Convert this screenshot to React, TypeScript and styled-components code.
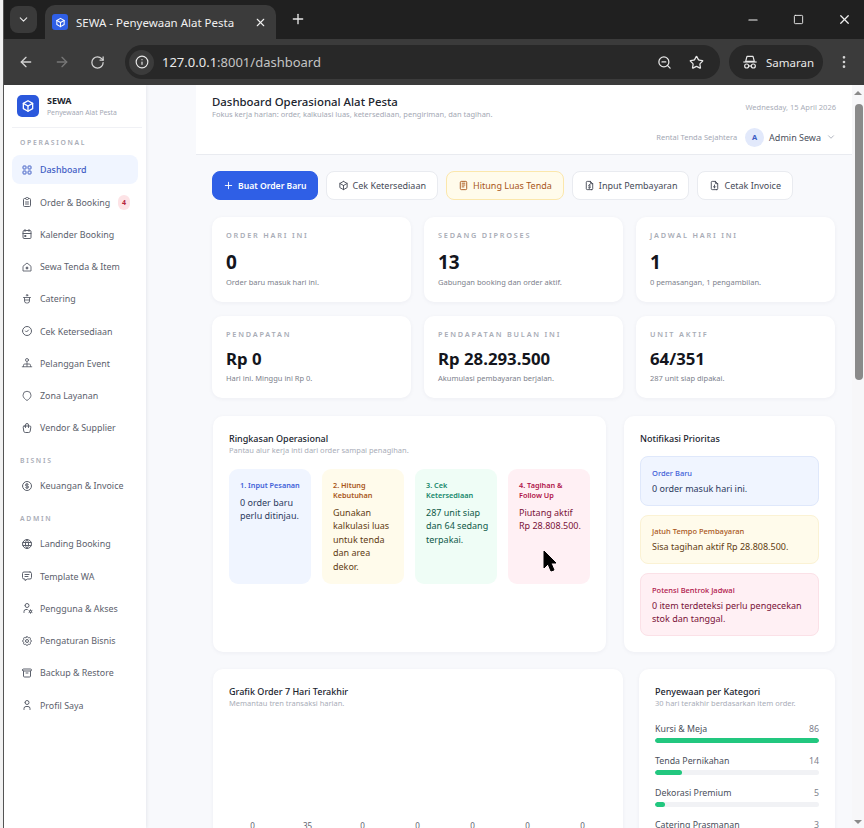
import React from "react";
import styled, { createGlobalStyle } from "styled-components";
import {
    ArrowLeft,
    ArrowRight,
    ChevronDown,
    Info,
    Minus,
    MoreVertical,
    Plus,
    RotateCw,
    Square,
    Star,
    X,
    ZoomOut,
} from "lucide-react";
import {
    TbArchive,
    TbBox,
    TbCalendarEvent,
    TbCircleCheck,
    TbClipboardText,
    TbCoin,
    TbFileDollar,
    TbFileDownload,
    TbLayoutGrid,
    TbMessage,
    TbNotes,
    TbSettings,
    TbShoppingBag,
    TbUser,
    TbUserCog,
    TbWorld,
} from "react-icons/tb";

const HomeDot = () => (
    <svg width="16" height="16" viewBox="0 0 24 24" fill="none" stroke="currentColor" strokeWidth="1.8" strokeLinejoin="round">
        <path d="M4 10.5 12 4l8 6.5V20H4z" />
        <circle cx="12" cy="14" r="2" fill="currentColor" />
    </svg>
);

const Pot = () => (
    <svg width="16" height="16" viewBox="0 0 24 24" fill="none" stroke="currentColor" strokeWidth="1.8" strokeLinecap="round" strokeLinejoin="round">
        <circle cx="12" cy="4.5" r="1.5" />
        <path d="M5 9h14" />
        <path d="M7 9v7a4 4 0 0 0 4 4h2a4 4 0 0 0 4-4V9" />
        <path d="M7 14h10" />
    </svg>
);

const People = () => (
    <svg width="16" height="16" viewBox="0 0 24 24" fill="none" stroke="currentColor" strokeWidth="1.8" strokeLinecap="round" strokeLinejoin="round">
        <circle cx="12" cy="6" r="3" />
        <path d="M5 19v-2.5A2.5 2.5 0 0 1 7.5 14h9a2.5 2.5 0 0 1 2.5 2.5V19" />
        <path d="M12 11v8" />
        <path d="M2.5 19.5h19" />
    </svg>
);

const Zone = () => (
    <svg width="16" height="16" viewBox="0 0 24 24" fill="none" stroke="currentColor" strokeWidth="1.8" strokeLinejoin="round">
        <path d="M12 21c-4-2.5-8-6-8-10.500a8 8 0 0 1 16 0C20 15 16 18.500 12 21z" />
    </svg>
);

const Incognito = () => (
    <svg width="16" height="16" viewBox="0 0 24 24" fill="none" stroke="currentColor" strokeWidth="1.8" strokeLinejoin="round">
        <path d="M7.500 3.500h9l2 7.500h-13z" />
        <path d="M2 12h20" />
        <circle cx="7" cy="18" r="3" />
        <circle cx="17" cy="18" r="3" />
        <path d="M10 18h4" />
    </svg>
);

const Cube = ({ size }: { size: number }) => (
    <svg width={size} height={size} viewBox="0 0 24 24" fill="none" stroke="#fff" strokeWidth="2.2" strokeLinejoin="round" strokeLinecap="round">
        <path d="M12 3l8 4.500v9L12 21l-8-4.500v-9z" />
        <path d="M4 7.500l8 4.500 8-4.500" />
        <path d="M12 12v9" />
    </svg>
);

const GlobalStyle = createGlobalStyle`
    html, body {
        margin: 0;
        padding: 0;
        height: 828px;
        overflow: hidden;
        background: #f4f4f4;
        font-family: "Noto Sans", "Open Sans", sans-serif;
    }

    * {
        box-sizing: border-box;
    }
`;

const Screen = styled.div`
    position: relative;
    display: flex;
    width: 864px;
    height: 828px;
    overflow: hidden;
`;

const DesktopStrip = styled.div`
    width: 4px;
    flex-shrink: 0;
    background: #f2f2f2;
    border-right: 1px solid #555;
`;

const Browser = styled.div`
    flex: 1;
    min-width: 0;
    display: flex;
    flex-direction: column;
`;

const TabStrip = styled.div`
    height: 39px;
    flex-shrink: 0;
    background: #202020;
    display: flex;
    align-items: flex-end;
    color: #e8e8e8;
    padding-left: 6px;
`;

const TabMenu = styled.div`
    width: 27px;
    height: 27px;
    margin: 0 8px 6px 0;
    border-radius: 8px;
    background: #3a3a3a;
    display: flex;
    align-items: center;
    justify-content: center;
`;

const Tab = styled.div`
    width: 231px;
    height: 34px;
    border-radius: 10px 10px 0 0;
    background: #3b3b3b;
    display: flex;
    align-items: center;
    padding: 0 9px 0 7px;
    font-size: 11.500px;
    color: #f0f0f0;
`;

const Favicon = styled.div`
    width: 16px;
    height: 16px;
    border-radius: 3px;
    background: #2f5fe6;
    display: flex;
    align-items: center;
    justify-content: center;
    margin-right: 8px;
`;

const TabTitle = styled.span`
    flex: 1;
    white-space: nowrap;
`;

const NewTab = styled.div`
    margin: 0 0 10px 14px;
    height: 20px;
    display: flex;
    align-items: center;
`;

const WindowControls = styled.div`
    margin-left: auto;
    align-self: center;
    display: flex;
    align-items: center;
    gap: 33px;
    padding: 0 12px 0 0;
    color: #f0f0f0;
`;

const Toolbar = styled.div`
    height: 46px;
    flex-shrink: 0;
    background: #3b3b3b;
    display: flex;
    align-items: center;
    padding: 0 8px 0 14px;
    color: #d4d4d4;
`;

const NavIcons = styled.div`
    display: flex;
    align-items: center;
    gap: 20px;
    width: 107px;
    flex-shrink: 0;
`;

const Omnibox = styled.div`
    width: 595px;
    height: 34px;
    border-radius: 17px;
    background: #282828;
    display: flex;
    align-items: center;
    padding: 0 16px 0 4px;
    font-size: 13px;
    color: #e8e8e8;
`;

const SiteInfo = styled.div`
    width: 25px;
    height: 25px;
    border-radius: 50%;
    background: #3b3b3b;
    display: flex;
    align-items: center;
    justify-content: center;
    margin-right: 8px;
`;

const Path = styled.span`
    color: #c4c4c4;
`;

const OmniActions = styled.div`
    margin-left: auto;
    display: flex;
    align-items: center;
    gap: 17px;
`;

const Incog = styled.div`
    margin-left: 9px;
    width: 94px;
    height: 34px;
    border-radius: 17px;
    background: #282828;
    display: flex;
    align-items: center;
    gap: 8px;
    padding-left: 13px;
    font-size: 11.500px;
    color: #e8e8e8;
`;

const MoreButton = styled.div`
    margin-left: 13px;
    display: flex;
    align-items: center;
`;

const Page = styled.div`
    flex: 1;
    min-height: 0;
    display: flex;
    background: #f8f9fc;
`;

const Sidebar = styled.aside`
    width: 142px;
    flex-shrink: 0;
    background: #fff;
    box-shadow: 1px 0 3px rgba(30, 40, 70, 0.08);
    padding: 0 8px;
`;

const Brand = styled.div`
    height: 43px;
    display: flex;
    align-items: center;
    gap: 8px;
    padding: 0 0 0 5px;
    margin: 0 -4px 0 0;
    border-bottom: 1px solid #f0f1f5;
`;

const BrandLogo = styled.div`
    width: 22px;
    height: 22px;
    border-radius: 5px;
    background: #2b58dc;
    display: flex;
    align-items: center;
    justify-content: center;
`;

const BrandName = styled.div`
    font-size: 9px;
    font-weight: 700;
    line-height: 12px;
    color: #20242e;
`;

const BrandSub = styled.div`
    font-size: 6.800px;
    line-height: 11px;
    color: #a4a8b4;
`;

const NavList = styled.nav`
    display: flex;
    flex-direction: column;
    gap: 3.250px;
`;

const NavLabel = styled.div`
    height: 22.500px;
    padding: 10px 0 0 8px;
    font-size: 6.800px;
    font-weight: 600;
    line-height: 10px;
    letter-spacing: 1.700px;
    color: #a8acb6;

    &:first-child {
        height: 24px;
    }
`;

const NavItem = styled.div<{ $active?: boolean }>`
    height: 29px;
    border-radius: 8px;
    display: flex;
    align-items: center;
    gap: 7px;
    padding: 0 8px 0 9px;
    font-size: 8.900px;
    color: ${(p) => (p.$active ? "#3f5cc4" : "#5c616c")};
    background: ${(p) => (p.$active ? "#f0f5ff" : "transparent")};
    font-weight: ${(p) => (p.$active ? 500 : 400)};
    white-space: nowrap;

    svg {
        flex-shrink: 0;
        width: 12px;
        height: 12px;
    }
`;

const NavBadge = styled.span`
    margin-left: auto;
    width: 12px;
    height: 15px;
    border-radius: 6px;
    background: #fde3e6;
    color: #b4233c;
    font-size: 7px;
    font-weight: 700;
    display: flex;
    align-items: center;
    justify-content: center;
`;

const Main = styled.main`
    flex: 1;
    min-width: 0;
    padding-left: 50px;
`;

const Header = styled.header`
    height: 70px;
    background: #fff;
    border-bottom: 1px solid #e9ebf0;
    padding: 9px 16px 0;
    display: flex;
    justify-content: space-between;
`;

const HeaderTitle = styled.h1`
    margin: 0;
    font-size: 11.400px;
    font-weight: 500;
    line-height: 15px;
    color: #20242e;
`;

const HeaderSub = styled.p`
    margin: 0;
    font-size: 7.500px;
    line-height: 11px;
    color: #a4a8b4;
`;

const HeaderRight = styled.div`
    display: flex;
    flex-direction: column;
    align-items: flex-end;
    gap: 15.500px;
    padding-top: 8px;
`;

const HeaderDate = styled.div`
    font-size: 7.500px;
    line-height: 10px;
    color: #a9adb8;
`;

const UserRow = styled.div`
    display: flex;
    align-items: center;
    font-size: 9px;
    color: #4a4f5b;
`;

const Company = styled.span`
    font-size: 7.500px;
    color: #a4a8b4;
    margin-right: 8px;
`;

const Avatar = styled.span`
    width: 19px;
    height: 19px;
    border-radius: 50%;
    background: #e2e9fb;
    color: #3f5cc4;
    font-size: 7.500px;
    font-weight: 700;
    display: flex;
    align-items: center;
    justify-content: center;
    margin-right: 5px;
`;

const UserChevron = styled.span`
    display: flex;
    margin-left: 5px;
    color: #a4a8b4;
`;

const Content = styled.div`
    padding: 16px 17px 0 16px;
`;

const Actions = styled.div`
    display: flex;
    gap: 8px;
    margin-bottom: 17px;
`;

const Action = styled.div<{ $tone?: "primary" | "warn" }>`
    height: 29px;
    padding: 0 ${(p) => (p.$tone === "primary" ? "10px" : "11px")};
    border-radius: 8px;
    display: flex;
    align-items: center;
    gap: 4px;
    font-size: ${(p) => (p.$tone === "primary" ? "8.600px" : "9px")};
    white-space: nowrap;
    font-weight: ${(p) => (p.$tone === "primary" ? 600 : 400)};
    color: ${(p) =>
        p.$tone === "primary"
            ? "#fff"
            : p.$tone === "warn"
            ? "#a8561a"
            : "#474c58"};
    background: ${(p) =>
        p.$tone === "primary"
            ? "#2f5fe6"
            : p.$tone === "warn"
            ? "#fffbeb"
            : "#fff"};
    border: 1px solid
        ${(p) =>
            p.$tone === "primary"
                ? "#2f5fe6"
                : p.$tone === "warn"
                ? "#fbe7ac"
                : "#e9ebf0"};

    svg {
        width: 11px;
        height: 11px;
    }
`;

const Stats = styled.div`
    display: grid;
    grid-template-columns: repeat(3, 1fr);
    gap: 14px 13px;
    margin-bottom: 18px;
`;

const StatCard = styled.div<{ $short?: boolean }>`
    height: ${(p) => (p.$short ? "82px" : "85px")};
    background: #fff;
    border-radius: 10px;
    box-shadow: 0 1px 4px rgba(30, 40, 70, 0.05);
    padding: ${(p) => (p.$short ? "12.500px 14px 0" : "13px 14px 0")};
`;

const StatLabel = styled.div`
    font-size: 7.300px;
    font-weight: 600;
    line-height: 10px;
    letter-spacing: 1.800px;
    color: #a8acb6;
`;

const StatValue = styled.div<{ $small?: boolean }>`
    margin-top: ${(p) => (p.$small ? "9px" : "8.500px")};
    font-size: ${(p) => (p.$small ? "16.800px" : "19px")};
    font-weight: 700;
    line-height: ${(p) => (p.$small ? "22px" : "26px")};
    color: #14161d;
`;

const StatNote = styled.div<{ $small?: boolean }>`
    margin-top: ${(p) => (p.$small ? "3.500px" : "2.500px")};
    font-size: 7.500px;
    line-height: 11px;
    color: #7d818c;
`;

const PanelRow = styled.div<{ $right: number; $gap: number }>`
    display: grid;
    grid-template-columns: minmax(0, 1fr) ${(p) => p.$right}px;
    gap: ${(p) => p.$gap}px;
    margin: 0 0 17px 1px;
`;

const Panel = styled.section`
    background: #fff;
    border-radius: 10px;
    box-shadow: 0 1px 4px rgba(30, 40, 70, 0.05);
    padding: 16px;
`;

const PanelTitle = styled.h2`
    margin: 0;
    font-size: 9px;
    font-weight: 500;
    line-height: 13px;
    color: #20242e;
`;

const PanelSub = styled.p`
    margin: 0;
    font-size: 7.500px;
    line-height: 11px;
    color: #a9adb8;
`;

const Tiles = styled.div`
    margin-top: 13px;
    display: grid;
    grid-template-columns: repeat(4, 1fr);
    gap: 11px;
`;

const tones = {
    blue: { bg: "#f0f5ff", head: "#3f5fd8", text: "#2c3a5e", line: "#dfe8fb" },
    yellow: { bg: "#fffbeb", head: "#a8561a", text: "#5f3d14", line: "#fbf2d4" },
    green: { bg: "#effdf6", head: "#15876a", text: "#0f5b49", line: "#ddf7ea" },
    pink: { bg: "#fff0f4", head: "#b0144a", text: "#7a1238", line: "#fbe1e7" },
};

type Tone = keyof typeof tones;

const Tile = styled.div<{ $tone: Tone }>`
    height: 115px;
    border-radius: 9px;
    padding: 11px 7px 0 11px;
    background: ${(p) => tones[p.$tone].bg};
    color: ${(p) => tones[p.$tone].text};
`;

const TileHead = styled.div<{ $tone: Tone }>`
    font-size: 7.300px;
    font-weight: 600;
    line-height: 10px;
    color: ${(p) => tones[p.$tone].head};
`;

const TileBody = styled.div`
    margin-top: 6px;
    font-size: 9px;
    line-height: 13.400px;
`;

const NotifList = styled.div`
    margin-top: 11px;
    display: flex;
    flex-direction: column;
    gap: 9px;
`;

const Notif = styled.div<{ $tone: Tone }>`
    border-radius: 8px;
    padding: 10.500px 11px 10px;
    background: ${(p) => tones[p.$tone].bg};
    border: 1px solid ${(p) => tones[p.$tone].line};
    color: ${(p) => tones[p.$tone].text};
`;

const NotifHead = styled.div<{ $tone: Tone }>`
    font-size: 7.500px;
    font-weight: 500;
    line-height: 11px;
    color: ${(p) => tones[p.$tone].head};
`;

const NotifBody = styled.div`
    margin-top: 3px;
    font-size: 9px;
    line-height: 13px;
`;

const ChartValues = styled.div`
    margin: 111px 0 0 -4px;
    display: grid;
    grid-template-columns: repeat(7, 55px);
    font-size: 8px;
    line-height: 11px;
    color: #5c616c;
    text-align: center;
`;

const CategoryRows = styled.div`
    margin-top: 14px;
    display: flex;
    flex-direction: column;
    gap: 12px;
`;

const CategoryLine = styled.div`
    display: flex;
    justify-content: space-between;
    font-size: 8.800px;
    line-height: 12px;
    color: #4a4f5b;
    margin-bottom: 3px;
`;

const CategoryCount = styled.span`
    color: #7d818c;
`;

const BarTrack = styled.div`
    height: 5px;
    border-radius: 3px;
    background: #f1f2f5;
    overflow: hidden;
`;

const BarFill = styled.div`
    height: 100%;
    border-radius: 3px;
    background: #22c77f;
`;

const Scrollbar = styled.div`
    width: 12px;
    flex-shrink: 0;
    background: #f7f7f9;
    display: flex;
    flex-direction: column;
    align-items: center;
    padding: 6px 0 4px;
`;

const ArrowUp = styled.div`
    width: 0;
    height: 0;
    border-left: 4px solid transparent;
    border-right: 4px solid transparent;
    border-bottom: 4px solid #8a8a8a;
`;

const ArrowDown = styled.div`
    margin-top: auto;
    width: 0;
    height: 0;
    border-left: 4px solid transparent;
    border-right: 4px solid transparent;
    border-top: 4px solid #8a8a8a;
`;

const Thumb = styled.div`
    margin-top: 9px;
    margin-left: 2px;
    width: 8px;
    height: 276px;
    border-radius: 4px;
    background: #8a8a8a;
`;

const Pointer = styled.svg`
    position: absolute;
    left: 543px;
    top: 550px;
`;

type NavEntry = { label: string; icon: React.ReactNode; active?: boolean; badge?: string };

const navGroups: { title: string; items: NavEntry[] }[] = [
    {
        title: "OPERASIONAL",
        items: [
            { label: "Dashboard", icon: <TbLayoutGrid />, active: true },
            { label: "Order & Booking", icon: <TbClipboardText />, badge: "4" },
            { label: "Kalender Booking", icon: <TbCalendarEvent /> },
            { label: "Sewa Tenda & Item", icon: <HomeDot /> },
            { label: "Catering", icon: <Pot /> },
            { label: "Cek Ketersediaan", icon: <TbCircleCheck /> },
            { label: "Pelanggan Event", icon: <People /> },
            { label: "Zona Layanan", icon: <Zone /> },
            { label: "Vendor & Supplier", icon: <TbShoppingBag /> },
        ],
    },
    {
        title: "BISNIS",
        items: [{ label: "Keuangan & Invoice", icon: <TbCoin /> }],
    },
    {
        title: "ADMIN",
        items: [
            { label: "Landing Booking", icon: <TbWorld /> },
            { label: "Template WA", icon: <TbMessage /> },
            { label: "Pengguna & Akses", icon: <TbUserCog /> },
            { label: "Pengaturan Bisnis", icon: <TbSettings /> },
            { label: "Backup & Restore", icon: <TbArchive /> },
            { label: "Profil Saya", icon: <TbUser /> },
        ],
    },
];

const stats = [
    { label: "ORDER HARI INI", value: "0", note: "Order baru masuk hari ini." },
    { label: "SEDANG DIPROSES", value: "13", note: "Gabungan booking dan order aktif." },
    { label: "JADWAL HARI INI", value: "1", note: "0 pemasangan, 1 pengambilan." },
    { label: "PENDAPATAN", value: "Rp 0", note: "Hari ini. Minggu ini Rp 0.", small: true },
    { label: "PENDAPATAN BULAN INI", value: "Rp 28.293.500", note: "Akumulasi pembayaran berjalan.", small: true },
    { label: "UNIT AKTIF", value: "64/351", note: "287 unit siap dipakai.", small: true },
];

const tiles: { tone: Tone; head: string; body: string }[] = [
    { tone: "blue", head: "1. Input Pesanan", body: "0 order baru perlu ditinjau." },
    { tone: "yellow", head: "2. Hitung Kebutuhan", body: "Gunakan kalkulasi luas untuk tenda dan area dekor." },
    { tone: "green", head: "3. Cek Ketersediaan", body: "287 unit siap dan 64 sedang terpakai." },
    { tone: "pink", head: "4. Tagihan & Follow Up", body: "Piutang aktif Rp 28.808.500." },
];

const notifications: { tone: Tone; head: string; body: string }[] = [
    { tone: "blue", head: "Order Baru", body: "0 order masuk hari ini." },
    { tone: "yellow", head: "Jatuh Tempo Pembayaran", body: "Sisa tagihan aktif Rp 28.808.500." },
    { tone: "pink", head: "Potensi Bentrok Jadwal", body: "0 item terdeteksi perlu pengecekan stok dan tanggal." },
];

const categories = [
    { name: "Kursi & Meja", count: 86 },
    { name: "Tenda Pernikahan", count: 14 },
    { name: "Dekorasi Premium", count: 5 },
    { name: "Catering Prasmanan", count: 3 },
];

const chartValues = [0, 35, 0, 0, 0, 0, 0];

const App = () => {
    return (
        <Screen>
            <GlobalStyle />
            <DesktopStrip />
            <Browser>
                <TabStrip>
                    <TabMenu>
                        <ChevronDown size={13} />
                    </TabMenu>
                    <Tab>
                        <Favicon>
                            <Cube size={11} />
                        </Favicon>
                        <TabTitle>SEWA - Penyewaan Alat Pesta</TabTitle>
                        <X size={13} />
                    </Tab>
                    <NewTab>
                        <Plus size={16} />
                    </NewTab>
                    <WindowControls>
                        <Minus size={14} />
                        <Square size={11} />
                        <X size={15} />
                    </WindowControls>
                </TabStrip>
                <Toolbar>
                    <NavIcons>
                        <ArrowLeft size={16} />
                        <ArrowRight size={16} color="#777" />
                        <RotateCw size={15} />
                    </NavIcons>
                    <Omnibox>
                        <SiteInfo>
                            <Info size={14} />
                        </SiteInfo>
                        127.0.0.1<Path>:8001/dashboard</Path>
                        <OmniActions>
                            <ZoomOut size={15} />
                            <Star size={15} />
                        </OmniActions>
                    </Omnibox>
                    <Incog>
                        <Incognito />
                        Samaran
                    </Incog>
                    <MoreButton>
                        <MoreVertical size={16} />
                    </MoreButton>
                </Toolbar>
                <Page>
                    <Sidebar>
                        <Brand>
                            <BrandLogo>
                                <Cube size={14} />
                            </BrandLogo>
                            <div>
                                <BrandName>SEWA</BrandName>
                                <BrandSub>Penyewaan Alat Pesta</BrandSub>
                            </div>
                        </Brand>
                        <NavList>
                            {navGroups.map((group) => (
                                <React.Fragment key={group.title}>
                                    <NavLabel>{group.title}</NavLabel>
                                    {group.items.map((item) => (
                                        <NavItem key={item.label} $active={item.active}>
                                            {item.icon}
                                            {item.label}
                                            {item.badge && <NavBadge>{item.badge}</NavBadge>}
                                        </NavItem>
                                    ))}
                                </React.Fragment>
                            ))}
                        </NavList>
                    </Sidebar>
                    <Main>
                        <Header>
                            <div>
                                <HeaderTitle>Dashboard Operasional Alat Pesta</HeaderTitle>
                                <HeaderSub>
                                    Fokus kerja harian: order, kalkulasi luas, ketersediaan, pengiriman, dan tagihan.
                                </HeaderSub>
                            </div>
                            <HeaderRight>
                                <HeaderDate>Wednesday, 15 April 2026</HeaderDate>
                                <UserRow>
                                    <Company>Rental Tenda Sejahtera</Company>
                                    <Avatar>A</Avatar>
                                    Admin Sewa
                                    <UserChevron>
                                        <ChevronDown size={10} />
                                    </UserChevron>
                                </UserRow>
                            </HeaderRight>
                        </Header>
                        <Content>
                            <Actions>
                                <Action $tone="primary">
                                    <Plus />
                                    Buat Order Baru
                                </Action>
                                <Action>
                                    <TbBox />
                                    Cek Ketersediaan
                                </Action>
                                <Action $tone="warn">
                                    <TbNotes />
                                    Hitung Luas Tenda
                                </Action>
                                <Action>
                                    <TbFileDollar />
                                    Input Pembayaran
                                </Action>
                                <Action>
                                    <TbFileDownload />
                                    Cetak Invoice
                                </Action>
                            </Actions>
                            <Stats>
                                {stats.map((stat) => (
                                    <StatCard key={stat.label} $short={stat.small}>
                                        <StatLabel>{stat.label}</StatLabel>
                                        <StatValue $small={stat.small}>{stat.value}</StatValue>
                                        <StatNote $small={stat.small}>{stat.note}</StatNote>
                                    </StatCard>
                                ))}
                            </Stats>
                            <PanelRow $right={211} $gap={18}>
                                <Panel>
                                    <PanelTitle>Ringkasan Operasional</PanelTitle>
                                    <PanelSub>Pantau alur kerja inti dari order sampai penagihan.</PanelSub>
                                    <Tiles>
                                        {tiles.map((tile) => (
                                            <Tile key={tile.head} $tone={tile.tone}>
                                                <TileHead $tone={tile.tone}>{tile.head}</TileHead>
                                                <TileBody>{tile.body}</TileBody>
                                            </Tile>
                                        ))}
                                    </Tiles>
                                </Panel>
                                <Panel>
                                    <PanelTitle>Notifikasi Prioritas</PanelTitle>
                                    <NotifList>
                                        {notifications.map((item) => (
                                            <Notif key={item.head} $tone={item.tone}>
                                                <NotifHead $tone={item.tone}>{item.head}</NotifHead>
                                                <NotifBody>{item.body}</NotifBody>
                                            </Notif>
                                        ))}
                                    </NotifList>
                                </Panel>
                            </PanelRow>
                            <PanelRow $right={196} $gap={16}>
                                <Panel>
                                    <PanelTitle>Grafik Order 7 Hari Terakhir</PanelTitle>
                                    <PanelSub>Memantau tren transaksi harian.</PanelSub>
                                    <ChartValues>
                                        {chartValues.map((value, index) => (
                                            <span key={index}>{value}</span>
                                        ))}
                                    </ChartValues>
                                </Panel>
                                <Panel>
                                    <PanelTitle>Penyewaan per Kategori</PanelTitle>
                                    <PanelSub>30 hari terakhir berdasarkan item order.</PanelSub>
                                    <CategoryRows>
                                        {categories.map((category) => (
                                            <div key={category.name}>
                                                <CategoryLine>
                                                    {category.name}
                                                    <CategoryCount>{category.count}</CategoryCount>
                                                </CategoryLine>
                                                <BarTrack>
                                                    <BarFill style={{ width: `${(category.count / 86) * 100}%` }} />
                                                </BarTrack>
                                            </div>
                                        ))}
                                    </CategoryRows>
                                </Panel>
                            </PanelRow>
                        </Content>
                    </Main>
                    <Scrollbar>
                        <ArrowUp />
                        <Thumb />
                        <ArrowDown />
                    </Scrollbar>
                </Page>
            </Browser>
            <Pointer width="14" height="23" viewBox="0 0 14 23">
                <path d="M1 1v17l4-4 3 7 3-1-3-7h5z" fill="#000" stroke="#000" strokeWidth="1" />
            </Pointer>
        </Screen>
    );
};

export default App;
